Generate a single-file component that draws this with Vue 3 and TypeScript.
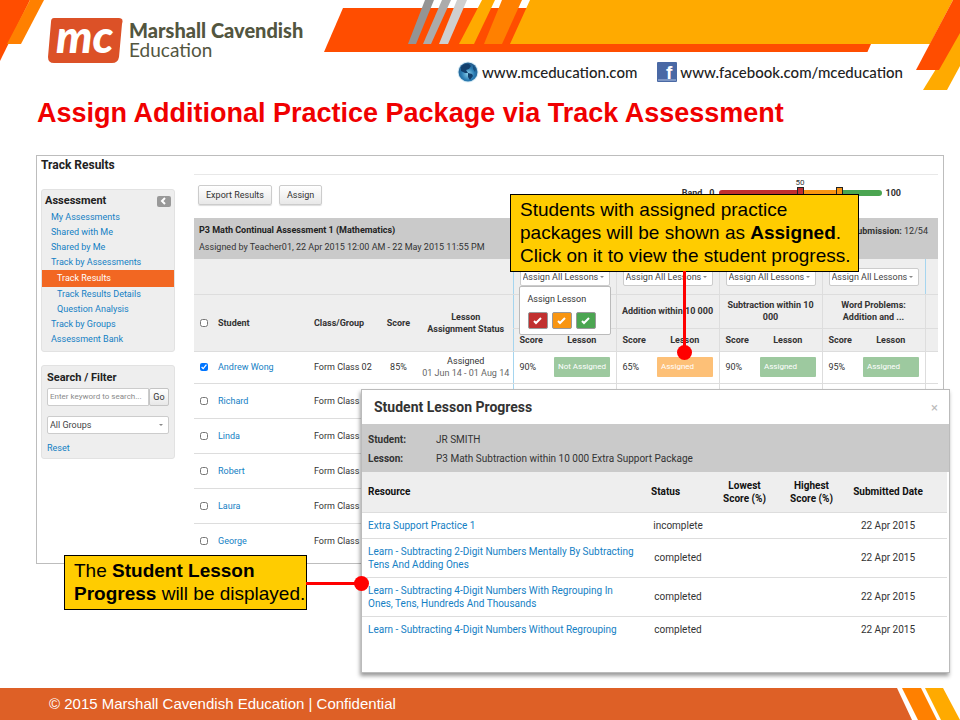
<script setup lang="ts">
import { ref } from 'vue'

interface NavItem {
  label: string
  nested?: boolean
  active?: boolean
}

interface LessonResult {
  score: string
  status: string
  tone: 'green' | 'orange'
}

interface StudentRow {
  name: string
  group: string
  score?: string
  status?: string
  period?: string
  lessons: LessonResult[]
}

interface ResourceRow {
  title: string
  status: string
  date: string
}

const navItems: NavItem[] = [
  { label: 'My Assessments' },
  { label: 'Shared with Me' },
  { label: 'Shared by Me' },
  { label: 'Track by Assessments' },
  { label: 'Track Results', nested: true, active: true },
  { label: 'Track Results Details', nested: true },
  { label: 'Question Analysis', nested: true },
  { label: 'Track by Groups' },
  { label: 'Assessment Bank' },
]

const lessonGroups: string[] = [
  '',
  'Addition within 10 000',
  'Subtraction within 10 000',
  'Word Problems: Addition and ...',
]

const students: StudentRow[] = [
  {
    name: 'Andrew Wong',
    group: 'Form Class 02',
    score: '85%',
    status: 'Assigned',
    period: '01 Jun 14 - 01 Aug 14',
    lessons: [
      { score: '90%', status: 'Not Assigned', tone: 'green' },
      { score: '65%', status: 'Assigned', tone: 'orange' },
      { score: '90%', status: 'Assigned', tone: 'green' },
      { score: '95%', status: 'Assigned', tone: 'green' },
    ],
  },
  { name: 'Richard', group: 'Form Class 02', lessons: [] },
  { name: 'Linda', group: 'Form Class 02', lessons: [] },
  { name: 'Robert', group: 'Form Class 02', lessons: [] },
  { name: 'Laura', group: 'Form Class 02', lessons: [] },
  { name: 'George', group: 'Form Class 02', lessons: [] },
]

const resources: ResourceRow[] = [
  { title: 'Extra Support Practice 1', status: 'incomplete', date: '22 Apr 2015' },
  {
    title: 'Learn - Subtracting 2-Digit Numbers Mentally By Subtracting Tens And Adding Ones',
    status: 'completed',
    date: '22 Apr 2015',
  },
  {
    title: 'Learn - Subtracting 4-Digit Numbers With Regrouping In Ones, Tens, Hundreds And Thousands',
    status: 'completed',
    date: '22 Apr 2015',
  },
  { title: 'Learn - Subtracting 4-Digit Numbers Without Regrouping', status: 'completed', date: '22 Apr 2015' },
]

const selected = ref<string[]>(['Andrew Wong'])
const keyword = ref('')
const lowBand = ref(50)
const highBand = ref(75)
</script>

<template>
  <div class="slide">
    <header class="masthead">
      <svg class="masthead-art" viewBox="0 0 960 92" preserveAspectRatio="none" aria-hidden="true">
        <polygon points="0,0 30,0 0,61" fill="#ff4d00" />
        <polygon points="30,0 44,0 21,44 7,44" fill="#ff8000" />
        <polygon points="343,8 890,8 868,52 324,52" fill="#ff4d00" />
        <polygon points="871,44 900,44 900,53 867,53" fill="#fff" />
        <polygon points="425,0 434,0 416,44 408,44" fill="#949494" />
        <polygon points="442,0 451,0 431,44 423,44" fill="#ababab" />
        <polygon points="457,0 467,0 448,44 439,44" fill="#cfcfcf" />
        <polygon points="482,0 495,0 474,44 459,44" fill="#ffaa00" />
        <polygon points="502,0 522,0 502,44 484,44" fill="#ff8000" />
        <polygon points="530,0 953,0 930,44 510,44" fill="#ffaa00" />
        <polygon points="960,30 960,66 947,90 923,90" fill="#ffaa00" />
        <polygon points="953,0 960,0 960,33 939,70 916,70" fill="#ff4d00" />
      </svg>
      <div class="brand">
        <svg class="brand-mark" viewBox="0 0 76 46" role="img" aria-label="mc">
          <path d="M4 0H71Q76 0 74 6L71 39Q70 45 64 45H6Q0 45 0 39L3 4Q3 0 6 0Z" fill="#dc5127" />
          <text x="8" y="35" class="brand-letters">mc</text>
        </svg>
        <div class="brand-name">
          <strong>Marshall Cavendish</strong>
          <span>Education</span>
        </div>
      </div>
      <nav class="site-links" aria-label="Sites">
        <a href="#mceducation">
          <svg width="22" height="22" viewBox="0 0 22 22" aria-hidden="true">
            <defs>
              <radialGradient id="globe" cx="0.5" cy="0.6" r="0.55">
                <stop offset="0" stop-color="#8bd0ec" />
                <stop offset="0.6" stop-color="#2a7db4" />
                <stop offset="1" stop-color="#245f91" />
              </radialGradient>
            </defs>
            <circle cx="11" cy="11" r="10.500" fill="#d6ecf6" />
            <circle cx="11" cy="11" r="9.500" fill="url(#globe)" />
            <path d="M4 6Q7 2 12 3L14 5L12 8L9 9L11 12L8 12L4 10Z" fill="#123f6c" />
            <path d="M11 12L15 13L16 15L13 19L11 16Z" fill="#123f6c" />
            <path d="M16 4L19 8L18 11L16 8Z" fill="#17507f" />
          </svg>
          www.mceducation.com
        </a>
        <a href="#facebook">
          <svg class="fb-mark" width="20" height="20" viewBox="0 0 20 20" aria-hidden="true">
            <rect width="20" height="20" rx="1" fill="#4a69a5" />
            <rect x="1" y="17" width="18" height="2" fill="#7d96c4" />
            <text x="9" y="17" class="fb-letter">f</text>
          </svg>
          www.facebook.com/mceducation
        </a>
      </nav>
    </header>

    <main class="content">
      <h1>Assign Additional Practice Package via Track Assessment</h1>

      <div class="stage">
        <section class="app">
          <h2 class="app-title">Track Results</h2>
          <div class="app-body">
            <aside class="sidebar">
              <div class="card">
                <div class="card-head">
                  <h3>Assessment</h3>
                  <button type="button" class="collapse" aria-label="Collapse menu">
                    <svg width="8" height="8" viewBox="0 0 8 8" aria-hidden="true">
                      <path d="M5 1L2 4L5 7" fill="none" stroke="#fff" stroke-width="2" />
                    </svg>
                  </button>
                </div>
                <ul class="menu">
                  <li v-for="item in navItems" :key="item.label">
                    <a href="#menu" :class="{ nested: item.nested, active: item.active }">{{ item.label }}</a>
                  </li>
                </ul>
              </div>
              <form class="card filter" @submit.prevent>
                <h3>Search / Filter</h3>
                <div class="search">
                  <input v-model="keyword" type="text" placeholder="Enter keyword to search..." aria-label="Keyword" />
                  <button type="submit">Go</button>
                </div>
                <div class="select-box">
                  <select aria-label="Group">
                    <option>All Groups</option>
                  </select>
                </div>
                <a href="#reset">Reset</a>
              </form>
            </aside>

            <div class="results">
              <div class="toolbar">
                <button type="button">Export Results</button>
                <button type="button">Assign</button>
                <div class="band">
                  <b>Band</b>
                  <b>0</b>
                  <div class="band-track">
                    <span class="band-value">{{ lowBand }}</span>
                    <input v-model.number="lowBand" class="low" type="range" min="0" max="100" aria-label="Lower band" />
                    <input v-model.number="highBand" class="high" type="range" min="0" max="100" aria-label="Upper band" />
                  </div>
                  <b>100</b>
                </div>
              </div>

              <div class="summary">
                <div>
                  <h3>P3 Math Continual Assessment 1 (Mathematics)</h3>
                  <p>Assigned by Teacher01, 22 Apr 2015 12:00 AM - 22 May 2015 11:55 PM</p>
                </div>
                <p><b>Submission:</b> 12/54</p>
              </div>

              <table class="grid">
                <colgroup>
                  <col class="c-check" />
                  <col />
                  <col class="c-class" />
                  <col class="c-score" />
                  <col class="c-status" />
                  <template v-for="n in 4" :key="n">
                    <col class="c-mark" />
                    <col class="c-lesson" />
                  </template>
                  <col class="c-end" />
                </colgroup>
                <thead>
                  <tr class="row-assign">
                    <td colspan="5"></td>
                    <td v-for="(g, i) in lessonGroups" :key="i" colspan="2" class="group">
                      <div class="select-box">
                        <select aria-label="Assign all lessons">
                          <option>Assign All Lessons</option>
                        </select>
                      </div>
                      <div v-if="i === 0" class="popover">
                        <span>Assign Lesson</span>
                        <div class="swatches">
                          <button v-for="tone in ['red', 'amber', 'leaf']" :key="tone" type="button" :class="tone" :aria-label="'Assign ' + tone">
                            <svg width="9" height="8" viewBox="0 0 9 8" aria-hidden="true">
                              <path d="M1 4L3 6L8 1" fill="none" stroke="#fff" stroke-width="2" />
                            </svg>
                          </button>
                        </div>
                      </div>
                    </td>
                    <td class="group"></td>
                  </tr>
                  <tr class="row-names">
                    <th rowspan="2"><input type="checkbox" aria-label="Select all students" /></th>
                    <th rowspan="2" class="left">Student</th>
                    <th rowspan="2" class="left">Class/Group</th>
                    <th rowspan="2">Score</th>
                    <th rowspan="2">Lesson<br />Assignment Status</th>
                    <th v-for="(g, i) in lessonGroups" :key="i" colspan="2" class="group name">{{ g }}</th>
                    <th class="group"></th>
                  </tr>
                  <tr class="row-sub">
                    <template v-for="n in 4" :key="n">
                      <th class="group left mark">Score</th>
                      <th>Lesson</th>
                    </template>
                    <th class="group"></th>
                  </tr>
                </thead>
                <tbody>
                  <tr v-for="s in students" :key="s.name">
                    <td class="center">
                      <input v-model="selected" type="checkbox" :value="s.name" :aria-label="'Select ' + s.name" />
                    </td>
                    <td class="student"><a href="#student">{{ s.name }}</a></td>
                    <td>{{ s.group }}</td>
                    <td class="center">{{ s.score }}</td>
                    <td class="center status">
                      {{ s.status }}
                      <span v-if="s.period">{{ s.period }}</span>
                    </td>
                    <template v-for="n in 4" :key="n">
                      <td class="group mark">{{ s.lessons[n - 1]?.score }}</td>
                      <td>
                        <button v-if="s.lessons[n - 1]" type="button" class="lesson" :class="s.lessons[n - 1].tone">
                          {{ s.lessons[n - 1].status }}
                        </button>
                      </td>
                    </template>
                    <td class="group"></td>
                  </tr>
                </tbody>
              </table>
            </div>
          </div>
        </section>

        <section class="modal" role="dialog" aria-labelledby="modal-title">
          <div class="modal-head">
            <h2 id="modal-title">Student Lesson Progress</h2>
            <button type="button" aria-label="Close">×</button>
          </div>
          <dl>
            <dt>Student:</dt>
            <dd>JR SMITH</dd>
            <dt>Lesson:</dt>
            <dd>P3 Math Subtraction within 10 000 Extra Support Package</dd>
          </dl>
          <table class="progress">
            <colgroup>
              <col />
              <col class="p-status" />
              <col class="p-score" />
              <col class="p-score" />
              <col class="p-date" />
            </colgroup>
            <thead>
              <tr>
                <th class="left">Resource</th>
                <th class="left">Status</th>
                <th>Lowest Score (%)</th>
                <th>Highest Score (%)</th>
                <th class="date">Submitted Date</th>
              </tr>
            </thead>
            <tbody>
              <tr v-for="r in resources" :key="r.title">
                <td class="left"><a href="#resource">{{ r.title }}</a></td>
                <td>{{ r.status }}</td>
                <td></td>
                <td></td>
                <td class="date">{{ r.date }}</td>
              </tr>
            </tbody>
          </table>
        </section>

        <p class="callout callout-status">
          Students with assigned practice<br />packages will be shown as <b>Assigned</b>.<br />Click on it to view the
          student progress.
        </p>
        <p class="callout callout-progress">
          The <b>Student Lesson</b><br /><b>Progress</b> will be displayed.
        </p>
      </div>
    </main>

    <footer class="footer">
      <span>© 2015 Marshall Cavendish Education | Confidential</span>
      <svg width="64" height="32" viewBox="0 0 64 32" aria-hidden="true">
        <polygon points="1,0 64,0 64,32 16,32" fill="#fff" />
        <polygon points="6,0 25,0 41,32 22,32" fill="#ff8000" />
        <polygon points="29,0 47,0 64,32 45,32" fill="#ffaa00" />
      </svg>
    </footer>
  </div>
</template>

<style>
body {
  margin: 0;
  background: #fff;
}
</style>

<style scoped>
.slide {
  display: flex;
  flex-direction: column;
  min-height: 100vh;
  overflow: hidden;
  background: #fff;
  color: #333;
  font: 9px/12px "Liberation Sans", Arial, sans-serif;
}

.slide *,
.slide *::before,
.slide *::after {
  box-sizing: border-box;
}

h1,
h2,
h3,
p,
ul,
dl,
dd {
  margin: 0;
  padding: 0;
}

a {
  color: #1480c4;
  text-decoration: none;
}

button,
input,
select {
  margin: 0;
  font: inherit;
  color: inherit;
}

table {
  width: 100%;
  border-collapse: collapse;
  table-layout: fixed;
}

/* Masthead */
.masthead {
  position: relative;
  display: flex;
  justify-content: space-between;
  height: 92px;
  padding: 18px 57px 0 48px;
}

.masthead-art {
  position: absolute;
  inset: 0;
  width: 100%;
  height: 100%;
}

.brand {
  position: relative;
  display: flex;
  align-items: flex-start;
  gap: 5px;
}

.brand-mark {
  width: 76px;
  height: 46px;
  overflow: visible;
}

.brand-letters {
  font: italic 900 46px Lato, sans-serif;
  fill: #fff;
}

.brand-name {
  display: flex;
  flex-direction: column;
  color: #53563f;
  font: 19px/20px Lato, sans-serif;
  padding-top: 2px;
}

.brand-name strong {
  font-size: 20px;
  font-weight: 900;
}

.site-links {
  position: relative;
  display: flex;
  align-items: center;
  align-self: flex-end;
  gap: 20px;
  height: 40px;
}

.site-links a {
  display: flex;
  align-items: center;
  gap: 3px;
  color: #222;
  font: 500 15px/20px Lato, sans-serif;
}

.fb-mark {
  overflow: visible;
}

.fb-letter {
  font: bold 19px "Liberation Sans", sans-serif;
  fill: #fff;
}

/* Page body */
.content {
  flex: 1;
  padding: 5px 16px 124px 36px;
}

h1 {
  padding-left: 1px;
  margin-bottom: 26px;
  color: #f00000;
  font-size: 27px;
  line-height: 32px;
}

.stage {
  position: relative;
}

.app {
  padding: 1px 5px 5px 4px;
  border: 1px solid #bdbdbd;
  background: #fff;
  font-family: Roboto, "Liberation Sans", sans-serif;
}

.app-title {
  height: 17px;
  font-size: 12px;
  line-height: 17px;
  color: #222;
}

.app-body {
  display: flex;
  gap: 19px;
}

.sidebar {
  display: flex;
  flex: 0 0 134px;
  flex-direction: column;
  gap: 13px;
  min-width: 0;
  padding-top: 15px;
}

.card {
  border: 1px solid #e2e2e2;
  border-radius: 3px;
  background: #eee;
}

h3 {
  font-size: 11px;
  line-height: 12px;
  color: #222;
}

.card-head {
  display: flex;
  align-items: center;
  justify-content: space-between;
  padding: 5px 3px 3px;
}

.collapse {
  display: grid;
  place-items: center;
  width: 14px;
  height: 11px;
  padding: 0;
  border: 0;
  border-radius: 2px;
  background: #999;
}

.menu {
  list-style: none;
  padding-bottom: 4px;
}

.menu a {
  display: block;
  padding-left: 9px;
  line-height: 15px;
}

.menu a.nested {
  padding-left: 15px;
}

.menu a.active {
  line-height: 17px;
  background: #f26722;
  color: #fff;
}

.filter {
  display: flex;
  flex-direction: column;
  align-items: flex-start;
  padding: 6px 5px 4px;
}

.search {
  display: flex;
  width: 100%;
  height: 18px;
  margin: 4px 0 10px;
}

.search input {
  flex: 1;
  min-width: 0;
  width: 0;
  padding: 0 0 0 2px;
  border: 1px solid #ccc;
  border-radius: 2px 0 0 2px;
  background: #fff;
  font-size: 8px;
}

.search input::placeholder {
  color: #8a8a8a;
}

.search button,
.toolbar button {
  border: 1px solid #c4c4c4;
  border-radius: 2px;
  background: linear-gradient(#fff, #e8e8e8);
}

.search button {
  width: 20px;
  padding: 0;
}

.filter .select-box {
  margin-bottom: 8px;
}

.select-box {
  position: relative;
  width: 100%;
  height: 18px;
}

.select-box::after {
  content: "";
  position: absolute;
  top: 8px;
  right: 6px;
  border: 2px solid transparent;
  border-top-color: #888;
}

.select-box select {
  display: block;
  appearance: none;
  width: 100%;
  height: 100%;
  padding: 0 2px;
  border: 1px solid #ccc;
  border-radius: 2px;
  background: #fff;
  color: #444;
}

/* Results area */
.results {
  flex: 1;
  min-width: 0;
  border-top: 1px solid #e8e8e8;
}

.toolbar {
  display: flex;
  align-items: center;
  gap: 7px;
  height: 43px;
  padding: 0 37px 3px 4px;
}

.toolbar button {
  height: 20px;
  padding: 0 7px;
  border-color: #ccc;
  box-shadow: 0 1px 1px #ddd;
}

.band {
  display: flex;
  align-items: center;
  gap: 4px;
  margin: 0 0 4px auto;
}

.band b:first-child {
  margin-right: 3px;
}

.band-track {
  position: relative;
  width: 163px;
  height: 6px;
  border-radius: 3px;
  background: linear-gradient(90deg, #c1302f 50%, #f89511 50% 75%, #4ba551 75%);
}

.band-value {
  position: absolute;
  bottom: 7px;
  left: 50%;
  font-size: 8px;
  transform: translateX(-50%);
}

.band-track input {
  position: absolute;
  top: -3px;
  left: 0;
  width: 100%;
  height: 12px;
  appearance: none;
  background: none;
  pointer-events: none;
}

.band-track input::-webkit-slider-thumb {
  appearance: none;
  width: 7px;
  height: 12px;
  border: 1px solid #222;
  background: #c1302f;
  pointer-events: auto;
}

.band-track .high::-webkit-slider-thumb {
  background: #f89511;
}

.summary {
  display: flex;
  justify-content: space-between;
  height: 41px;
  padding: 6px 10px 0 5px;
  background: #cacaca;
}

.summary h3 {
  margin-bottom: 5px;
  font-size: 9px;
}

.summary > p {
  padding-top: 1px;
}

.c-check {
  width: 20px;
}

.c-class {
  width: 64px;
}

.c-score {
  width: 41px;
}

.c-status {
  width: 94px;
}

.c-mark {
  width: 35px;
}

.c-lesson {
  width: 68px;
}

.c-end {
  width: 13px;
}

.grid th,
.grid td {
  padding: 0;
}

.grid thead {
  background: #eee;
}

.grid th {
  line-height: 12px;
}

.grid th:nth-child(2):not(.name),
.grid .student {
  padding-left: 4px;
}

.grid .row-sub th:nth-child(even) {
  padding-left: 0;
}

.grid .group {
  border-left: 1px solid #ddd;
}

.grid tr > .group:nth-child(6),
.grid .row-assign > .group:nth-child(2),
.grid .row-sub > .group:first-child {
  border-left-color: #a5d5ef;
}

.row-assign td {
  position: relative;
  height: 35px;
  border-bottom: 1px solid #ddd;
}

.grid .row-assign .group {
  padding: 1px 6px 0;
}

.row-names th {
  height: 34px;
  border-bottom: 1px solid #ddd;
}

.grid .row-names .name {
  padding: 0 3px;
}

.row-sub th {
  height: 23px;
  border-bottom: 1px solid #ddd;
}

.popover {
  position: absolute;
  z-index: 1;
  top: 27px;
  left: 5px;
  display: flex;
  flex-direction: column;
  gap: 7px;
  width: 92px;
  height: 49px;
  padding: 6px 8px;
  border: 1px solid #bbb;
  border-radius: 2px;
  background: #fff;
}

.swatches {
  display: flex;
  gap: 4px;
}

.swatches button {
  display: grid;
  place-items: center;
  width: 20px;
  height: 17px;
  padding: 0;
  border: 1px solid #999;
  border-radius: 2px;
}

.swatches .red {
  background: #c1302f;
}

.swatches .amber {
  background: #f89511;
}

.swatches .leaf {
  background: #4ba551;
}

.left {
  text-align: left;
}

.center {
  text-align: center;
}

.grid .mark {
  padding-left: 6px;
}

.grid tbody td {
  height: 35px;
  border-bottom: 1px solid #ddd;
}

.grid tbody tr:first-child td {
  height: 32px;
}

.grid tbody tr:last-child td {
  border-bottom: 0;
}

.grid .status span {
  display: block;
  color: #666;
}

.grid input[type="checkbox"] {
  display: block;
  width: 8px;
  height: 8px;
  margin: 0 auto;
}

.lesson {
  display: block;
  width: 56px;
  height: 20px;
  margin-left: 6px;
  padding: 0 0 0 4px;
  border: 0;
  border-radius: 1px;
  font-size: 8px;
  color: #fff;
  text-align: left;
  white-space: nowrap;
}

.lesson.green {
  background: #9dc99f;
}

.lesson.orange {
  background: #fdc077;
}

/* Lesson progress dialog */
.modal {
  position: absolute;
  top: 234px;
  right: -6px;
  left: 325px;
  min-height: 284px;
  border: 1px solid #bbb;
  background: #fff;
  box-shadow: -1px 3px 4px rgba(0, 0, 0, 0.4);
  font-family: Roboto, "Liberation Sans", sans-serif;
  font-size: 10px;
  line-height: 13px;
}

.modal-head {
  display: flex;
  align-items: center;
  justify-content: space-between;
  height: 34px;
  padding: 0 11px 0 12px;
}

.modal-head h2 {
  font-size: 14px;
  line-height: 18px;
}

.modal-head button {
  padding: 0;
  border: 0;
  background: none;
  color: #bbb;
  font-size: 13px;
}

dl {
  display: grid;
  grid-template-columns: 68px 1fr;
  row-gap: 6px;
  padding: 9px 6px 7px;
  background: #cacaca;
}

dt {
  font-weight: bold;
}

.progress {
  width: calc(100% - 2px);
}

.p-status {
  width: 66px;
}

.p-score {
  width: 67px;
}

.p-date {
  width: 102px;
}

.progress th,
.progress td {
  padding: 6px 6px;
  border-bottom: 1px solid #ddd;
  text-align: center;
}

.progress th {
  height: 40px;
  background: #eee;
  color: #111;
}

.progress .left {
  text-align: left;
}

.progress td.left {
  padding-right: 10px;
}

.progress .date {
  padding: 6px 16px 6px 0;
}

.progress tr:last-child td {
  border-bottom: 0;
}

/* Callouts */
.callout {
  position: absolute;
  padding: 3px 0 4px 9px;
  border: 1px solid #000;
  background: #fc0;
  color: #000;
  font-size: 19px;
  line-height: 23px;
  white-space: nowrap;
}

.callout::before,
.callout::after {
  content: "";
  position: absolute;
  background: #f00;
}

.callout::after {
  width: 15px;
  height: 15px;
  border-radius: 50%;
}

.callout-status {
  top: 39px;
  right: 85px;
  width: 349px;
}

.callout-status::before {
  top: 100%;
  left: 172px;
  width: 3px;
  height: 82px;
}

.callout-status::after {
  top: calc(100% + 74px);
  left: 166px;
}

.callout-progress {
  top: 400px;
  left: 28px;
  width: 243px;
}

.callout-progress::before {
  top: 26px;
  left: 100%;
  width: 56px;
  height: 3px;
}

.callout-progress::after {
  top: 20px;
  left: calc(100% + 48px);
}

/* Footer */
.footer {
  display: flex;
  align-items: center;
  justify-content: space-between;
  height: 32px;
  padding-left: 49px;
  background: #de6026;
  color: #fff;
  font-size: 15px;
  line-height: 20px;
}
</style>
